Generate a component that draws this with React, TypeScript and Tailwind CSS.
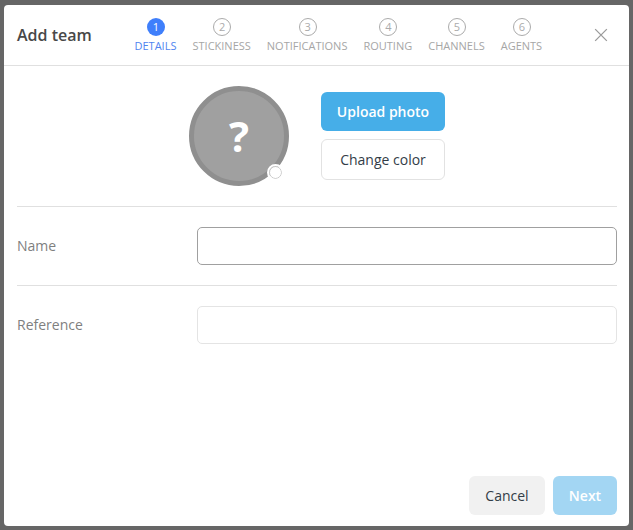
import React from "react";

const steps = ["DETAILS", "STICKINESS", "NOTIFICATIONS", "ROUTING", "CHANNELS", "AGENTS"];

export default function App() {
  return (
    <div className="w-[633px] h-[530px] bg-[#666666] pt-[5px] pb-[4px] px-[4px] font-['Open_Sans',sans-serif] overflow-hidden">
      <div className="w-[625px] h-[521px] bg-white rounded-[4px] flex flex-col">
        <header className="h-[61px] shrink-0 border-b border-[#e0e0e0] flex items-start pl-[13px]">
          <h1 className="w-[117.5px] mt-[19px] text-[16px] leading-[22px] font-semibold text-[#484848]">Add team</h1>
          <nav className="flex gap-[16px] mt-[13px]">
            {steps.map((s, i) => (
              <div key={s} className="flex flex-col items-center">
                <div
                  className={
                    i === 0
                      ? "ml-[1px] w-[18px] h-[18px] rounded-full bg-[#3f7ffb] text-white text-[11px] leading-[18px] text-center"
                      : "ml-[1px] w-[18px] h-[18px] rounded-full border border-[#ababab] text-[#ababab] text-[11px] leading-[16px] text-center"
                  }
                >
                  {i + 1}
                </div>
                <span className={"text-[11px] leading-[15px] mt-[2px] " + (i === 0 ? "text-[#4f84f0]" : "text-[#a6a6a6]")}>{s}</span>
              </div>
            ))}
          </nav>
          <button className="ml-[52px] mt-[23px] w-[14px] h-[14px] text-[#9a9a9a]">
            <svg viewBox="0 0 12 12" width="14" height="14" fill="none" stroke="currentColor" strokeWidth="1.1">
              <path d="M1 1l10 10M11 1L1 11" />
            </svg>
          </button>
        </header>
        <main className="flex-1 pl-[13px] pr-[12px] flex flex-col">
          <section className="h-[141px] border-b border-[#e0e0e0] flex pl-[172px] pt-[20px] shrink-0">
            <div className="relative w-[100px] h-[100px] mr-[32px] rounded-full bg-[#a0a0a0] border-[5px] border-[#8f8f8f] flex items-center justify-center">
              <span className="text-white text-[42px] leading-none font-bold">?</span>
              <span className="absolute right-[2px] bottom-[2px] w-[13px] h-[13px] rounded-full bg-white border border-[#c8c8c8] outline-2 outline-white"></span>
            </div>
            <div className="w-[124px] pt-[6px] flex flex-col gap-[8px]">
              <button className="h-[39px] rounded-[6px] bg-[#46aee8] text-white text-[14px] font-semibold">Upload photo</button>
              <button className="h-[41px] rounded-[6px] bg-white border border-[#e2e2e2] text-[#333d47] text-[14px]">Change color</button>
            </div>
          </section>
          <div className="h-[79px] border-b border-[#e0e0e0] flex items-center shrink-0">
            <label className="w-[180px] -mt-[2px] text-[14px] text-[#7f7f7f]">Name</label>
            <input className="w-[420px] h-[38px] rounded-[5px] border border-[#a0a0a0] bg-white outline-none" />
          </div>
          <div className="h-[77px] flex items-center shrink-0">
            <label className="w-[180px] text-[14px] text-[#7f7f7f]">Reference</label>
            <input className="w-[420px] h-[38px] rounded-[5px] border border-[#e4e4e4] bg-white outline-none" />
          </div>
          <footer className="mt-auto mb-[11px] flex justify-end gap-[8px]">
            <button className="w-[76px] h-[39px] rounded-[6px] bg-[#f1f1f1] text-[#333d47] text-[14px]">Cancel</button>
            <button className="w-[64px] h-[39px] rounded-[6px] bg-[#a3d6f3] text-white text-[14px] font-semibold">Next</button>
          </footer>
        </main>
      </div>
    </div>
  );
}
